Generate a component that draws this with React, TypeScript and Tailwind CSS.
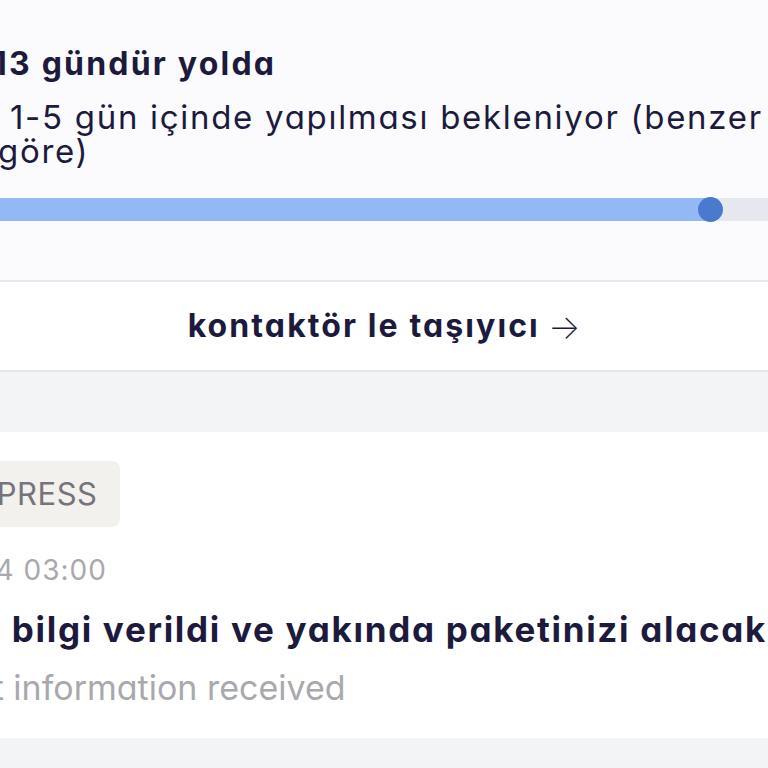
import React from 'react';

const font = "font-['Inter','Noto_Sans',sans-serif] [font-feature-settings:'cv11']";

export default function App() {
  return (
    <div className={`w-full h-[768px] overflow-hidden bg-[#f3f4f6] text-[#1d1b3d] ${font}`}>
      {/* Transit summary */}
      <section className="h-[280px] bg-[#fbfbfd] pt-[40px]">
        <h1 className="-ml-[7px] text-[32px] font-bold leading-[48px] tracking-[2.2px] whitespace-nowrap">
          13 gündür yolda
        </h1>
        <p className="mt-[12px] text-[33px] font-normal leading-[34px] tracking-[1.7px] whitespace-nowrap">
          <span className="block pl-[10px]">1-5 gün içinde yapılması bekleniyor (benzer</span>
          <span className="block -ml-[2px]">göre)</span>
        </p>
        <div className="mt-[30px] h-[23px] bg-[#e6e7ef]">
          <div className="relative h-full w-[711px] bg-[#94b8f6]">
            <span className="absolute -right-[12px] top-[-1px] h-[25px] w-[25px] rounded-full bg-[#4a79cd]" />
          </div>
        </div>
      </section>

      {/* Carrier contact */}
      <div className="flex h-[92px] items-center justify-center border-y-2 border-[#e6e7ee] bg-white">
        <span className="text-[32px] font-bold tracking-[2.1px]">kontaktör le taşıyıcı</span>
        <span className="ml-[8px] text-[34px] font-extralight">→</span>
      </div>

      <div className="h-[60px]" />

      {/* Latest tracking event */}
      <section className="h-[306px] bg-white pt-[29px]">
        <div className="-ml-[64px] inline-flex h-[66px] items-center rounded-[8px] bg-[#f3f1ee] pl-[20px] pr-[23px]">
          <span className="text-[31px] font-normal tracking-[0.5px] text-[#76747a]">EXPRESS</span>
        </div>
        <div className="mt-[26px] -ml-[133px] text-[28px] leading-[34px] tracking-[1px] text-[#a9a9ad] whitespace-nowrap">
          17.01.2024 03:00
        </div>
        <div className="mt-[20px] -ml-[22px] text-[35px] font-bold leading-[44px] tracking-[1.7px] whitespace-nowrap">
          a bilgi verildi ve yakında paketinizi alacak
        </div>
        <div className="mt-[17px] -ml-[148px] text-[34px] leading-[40px] text-[#a9a9ad] whitespace-nowrap">
          Shipment information received
        </div>
      </section>
    </div>
  );
}
